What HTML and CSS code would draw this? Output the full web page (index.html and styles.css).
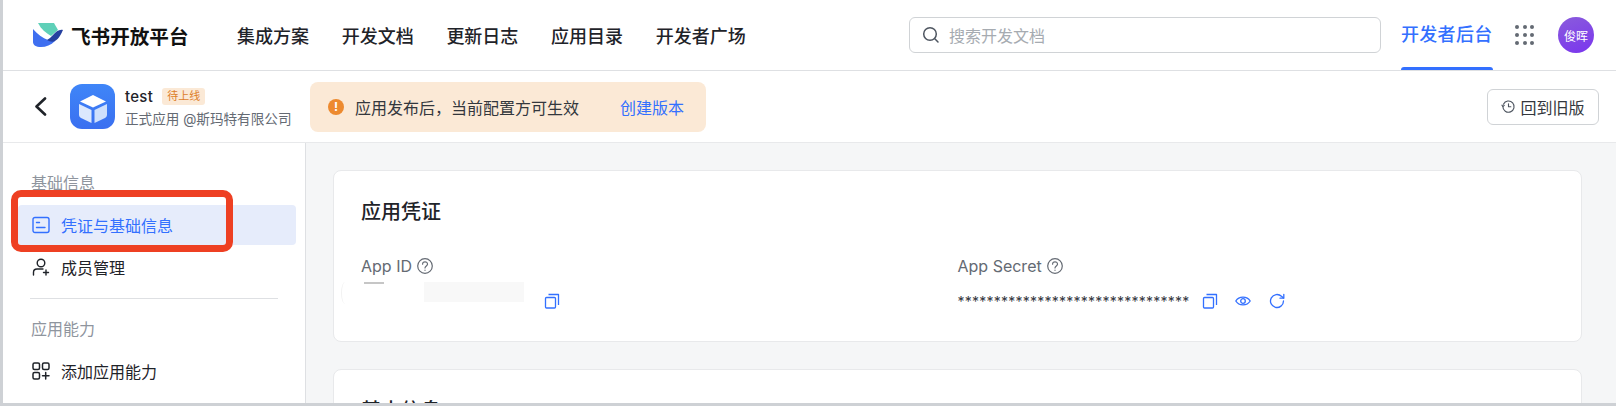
FILE: index.html
```html
<!DOCTYPE html>
<html lang="zh">
<head>
<meta charset="utf-8">
<title>飞书开放平台</title>
<link rel="stylesheet" href="styles.css">
</head>
<body>
<div class="page">
  <header class="topbar">
    <div class="brand">
      <svg class="brand-mark" viewBox="0 0 30 24" width="30" height="24">
        <path fill="#5fd0b8" d="M5 0H21L25 7L18 13C13 10 8 6 5 0Z"/>
        <path fill="#3f6ff0" d="M0 6C4 11 10 15 15 17L22 18C18 22 13 24 8 24C3 24 0 22 0 19Z"/>
        <path fill="#25409f" d="M30 7C26 6 23 9 20 12C18 14 16 16 14 17C17 19 20 19 22 18C26 16 28 11 30 7Z"/>
      </svg>
      <span class="brand-name">飞书开放平台</span>
    </div>
    <nav class="nav">
      <a>集成方案</a><a>开发文档</a><a>更新日志</a><a>应用目录</a><a>开发者广场</a>
    </nav>
    <div class="search">
      <svg viewBox="0 0 18 18" width="18" height="18" fill="none" stroke="#4e5560" stroke-width="1.5" stroke-linecap="round"><circle cx="8" cy="8" r="6.3"/><path d="M12.8 12.8L16 16"/></svg>
      <span>搜索开发文档</span>
    </div>
    <a class="console">开发者后台</a>
    <div class="apps">
      <i></i><i></i><i></i><i></i><i></i><i></i><i></i><i></i><i></i>
    </div>
    <div class="avatar">俊晖</div>
  </header>

  <section class="subbar">
    <svg class="back" viewBox="0 0 13 19" width="13" height="19" fill="none" stroke="#1f2329" stroke-width="2.6" stroke-linecap="round" stroke-linejoin="round"><path d="M11 1.5L2.500 9.500L11 17.500"/></svg>
    <div class="app-icon">
      <svg viewBox="0 0 44 44" width="44" height="44">
        <path fill="#fff" d="M22 10L35 16.500L22 22.500L9 16.500Z"/>
        <path fill="#dbe8fd" d="M8 19L20.500 25V38L10 33C8.500 32 8 31 8 29.500Z"/>
        <path fill="#cfe0fc" d="M36 19L23.500 25V38L34 33C35.500 32 36 31 36 29.500Z"/>
      </svg>
    </div>
    <div class="app-meta">
      <div class="app-title"><span class="app-name">test</span><span class="tag">待上线</span></div>
      <div class="app-sub">正式应用 @斯玛特有限公司</div>
    </div>
    <div class="notice">
      <span class="notice-icon">!</span>
      <span class="notice-text">应用发布后，当前配置方可生效</span>
      <a class="notice-link">创建版本</a>
    </div>
    <button class="old-btn">
      <svg viewBox="0 0 16 16" width="15" height="15" fill="none" stroke="#4e5560" stroke-width="1.2" stroke-linecap="round" stroke-linejoin="round"><path d="M2.600 5.500A6 6 0 1 1 2 8"/><path d="M1 6.500L2 8L3.500 6.800"/><path d="M8 5V8.300H10.500"/></svg>
      回到旧版
    </button>
  </section>

  <div class="body">
    <aside class="sidebar">
      <div class="group-title first">基础信息</div>
      <div class="item active">
        <svg viewBox="0 0 18 18" width="18" height="18" fill="none" stroke="#3370ff" stroke-width="1.4" stroke-linecap="round"><rect x="1" y="1.500" width="16" height="15" rx="2"/><path d="M4.500 6.500H7.500M4.500 11.500H13"/></svg>
        凭证与基础信息
      </div>
      <div class="item">
        <svg viewBox="0 0 18 18" width="18" height="18" fill="none" stroke="#1f2329" stroke-width="1.4" stroke-linecap="round"><circle cx="9" cy="5" r="3.800"/><path d="M1.500 17V14.500C1.500 12.500 3 11 5 11H11M14 12V17M11.500 14.500H16.500"/></svg>
        成员管理
      </div>
      <div class="divider"></div>
      <div class="group-title">应用能力</div>
      <div class="item">
        <svg viewBox="0 0 18 18" width="18" height="18" fill="none" stroke="#1f2329" stroke-width="1.5" stroke-linecap="round"><rect x="1" y="1" width="6.500" height="6.500" rx="1.500"/><rect x="10.500" y="1" width="6.500" height="6.500" rx="1.500"/><rect x="1" y="10.500" width="6.500" height="6.500" rx="1.500"/><path d="M13.700 10.500V17M10.500 13.700H17"/></svg>
        添加应用能力
      </div>
      <div class="divider low"></div>
    </aside>

    <main class="main">
      <section class="card">
        <h2>应用凭证</h2>
        <div class="fields">
          <div class="field">
            <div class="label">App ID
              <svg viewBox="0 0 16 16" width="16" height="16" fill="none" stroke="#646a73" stroke-width="1.2" stroke-linecap="round"><circle cx="8" cy="8" r="7.300"/><path d="M5.600 6.200C5.600 3 10.500 3 10.500 6.200C10.500 7.900 8 8 8 10"/><path d="M8 12.200V12.300"/></svg>
            </div>
            <div class="value value-id">
              <i class="mask-line"></i><i class="mask-patch"></i><i class="mask-arc"></i>
              <svg class="act" viewBox="0 0 16 16" width="16" height="16" fill="none" stroke="#3370ff" stroke-width="1.300" stroke-linejoin="round"><rect x="1.500" y="4.500" width="10" height="10.500" rx="1"/><path d="M4.500 1.500H14.500V12"/></svg>
            </div>
          </div>
          <div class="field">
            <div class="label">App Secret
              <svg viewBox="0 0 16 16" width="16" height="16" fill="none" stroke="#646a73" stroke-width="1.2" stroke-linecap="round"><circle cx="8" cy="8" r="7.300"/><path d="M5.600 6.200C5.600 3 10.500 3 10.500 6.200C10.500 7.900 8 8 8 10"/><path d="M8 12.200V12.300"/></svg>
            </div>
            <div class="value">
              <span class="secret">********************************</span>
              <div class="actions">
                <svg viewBox="0 0 16 16" width="16" height="16" fill="none" stroke="#3370ff" stroke-width="1.300" stroke-linejoin="round"><rect x="1.500" y="4.500" width="10" height="10.500" rx="1"/><path d="M4.500 1.500H14.500V12"/></svg>
                <svg viewBox="0 0 16 16" width="16" height="16" fill="none" stroke="#3370ff" stroke-width="1.300"><path d="M.8 8C4 2.800 12 2.800 15.200 8C12 13.200 4 13.200 .8 8Z"/><circle cx="8" cy="8" r="2.300"/></svg>
                <svg viewBox="0 0 16 16" width="16" height="16" fill="none" stroke="#3370ff" stroke-width="1.300" stroke-linecap="round" stroke-linejoin="round"><path d="M14.500 8A6.500 6.500 0 1 1 12.500 3.300L14.500 5"/><path d="M14.800 1.300V5.200H11"/></svg>
              </div>
            </div>
          </div>
        </div>
      </section>
      <section class="card second">
        <h2>基本信息</h2>
      </section>
    </main>
  </div>
  <div class="callout-box"></div>
</div>
</body>
</html>
```

FILE: styles.css
```css
* { box-sizing: border-box; }
html, body { margin: 0; padding: 0; }
body {
  font-family: Inter, "Noto Sans CJK SC", sans-serif;
  color: #1f2329;
  background: #fff;
}
.page {
  position: relative;
  width: 1616px;
  height: 406px;
  overflow: hidden;
  border-left: 3px solid #ced1d5;
  border-bottom: 3px solid #ced1d5;
  display: flex;
  flex-direction: column;
}
.topbar {
  flex: none;
  height: 71px;
  border-bottom: 1px solid #dee0e3;
  display: flex;
  align-items: center;
  padding-left: 30px;
}
.brand { display: flex; align-items: center; gap: 8px; width: 204px; }
.brand-mark { flex: none; }
.brand-name { font-size: 19.600px; font-weight: 700; color: #111; white-space: nowrap; }
.nav { display: flex; gap: 32.700px; width: 672px; font-size: 18px; font-weight: 500; color: #1f2329; }
.search {
  width: 472px;
  height: 36px;
  border: 1px solid #d0d3d6;
  border-radius: 6px;
  display: flex;
  align-items: center;
  gap: 9px;
  padding-left: 12px;
  font-size: 16px;
  color: #a6abb1;
}
.console {
  margin-left: 20px;
  width: 92px;
  height: 70px;
  line-height: 70px;
  font-size: 18px;
  font-weight: 500;
  letter-spacing: .3px;
  color: #3370ff;
  white-space: nowrap;
  position: relative;
}
.console::after {
  content: "";
  position: absolute;
  left: 0;
  right: 0;
  bottom: 0;
  height: 3px;
  background: #3370ff;
  border-radius: 3px 3px 0 0;
}
.apps {
  margin-left: 22px;
  width: 18px;
  display: grid;
  grid-template-columns: repeat(3, 4px);
  grid-auto-rows: 4px;
  gap: 4px 3.500px;
}
.apps i { background: #646a73; border-radius: 50%; }
.avatar {
  margin-left: 25px;
  width: 36px;
  height: 36px;
  border-radius: 50%;
  background: linear-gradient(160deg, #8a5cdc, #7a35ee);
  color: #fff;
  font-size: 12px;
  display: flex;
  align-items: center;
  justify-content: center;
}
.subbar {
  flex: none;
  height: 72px;
  border-bottom: 1px solid #e8e9eb;
  display: flex;
  align-items: center;
  padding-left: 31px;
}
.back { flex: none; }
.app-icon {
  margin-left: 23px;
  width: 45px;
  height: 45px;
  border-radius: 12px;
  background: linear-gradient(180deg, #3f86f8, #3a6ff0);
  display: flex;
  align-items: center;
  justify-content: center;
}
.app-meta { margin-left: 10px; width: 185px; padding-top: 2px; }
.app-title { display: flex; align-items: center; gap: 9px; height: 20px; }
.app-name { font-size: 15px; font-weight: 500; letter-spacing: .3px; }
.tag {
  height: 17px;
  padding: 0 5px;
  line-height: 17px;
  font-size: 11px;
  border-radius: 3px;
  color: #dd7e29;
  background: #fbe9d6;
}
.app-sub { margin-top: 2px; font-size: 13.600px; line-height: 20px; color: #646a73; white-space: nowrap; }
.notice {
  width: 396px;
  height: 50px;
  border-radius: 8px;
  background: #fbe9d6;
  display: flex;
  align-items: center;
  padding-left: 18px;
  font-size: 16px;
  color: #33373d;
}
.notice-icon {
  width: 16px;
  height: 16px;
  border-radius: 50%;
  background: #ed8a2f;
  color: #fff;
  font-size: 12px;
  font-weight: 700;
  line-height: 16px;
  text-align: center;
}
.notice-text { margin-left: 11px; }
.notice-link { margin-left: 41px; color: #3370ff; }
.old-btn {
  margin-left: auto;
  margin-right: 17px;
  width: 112px;
  height: 36px;
  border: 1px solid #d0d3d6;
  border-radius: 6px;
  background: #fff;
  display: flex;
  align-items: center;
  justify-content: center;
  gap: 4px;
  padding: 0;
  font-family: inherit;
  font-size: 16px;
  color: #33373d;
}
.body { flex: 1; min-height: 0; display: flex; }
.sidebar {
  flex: none;
  width: 303px;
  border-right: 1px solid #dee0e3;
  padding: 0 9px 0 15px;
}
.group-title {
  height: 24px;
  line-height: 24px;
  padding-left: 13px;
  font-size: 16px;
  color: #8f959e;
}
.group-title.first { margin-top: 28px; margin-bottom: 10px; }
.item {
  height: 40px;
  display: flex;
  align-items: center;
  gap: 11px;
  padding-left: 14px;
  font-size: 16px;
  border-radius: 4px;
}
.item.active { background: #e6ecfb; color: #3370ff; margin-bottom: 2px; }
.divider { height: 1px; margin: 11px 11px 0 12px; background: #dee0e3; width: 248px; }
.sidebar > .divider + .group-title { margin-top: 18px; margin-bottom: 10px; }
.divider.low { margin-top: 12px; }
.callout-box {
  position: absolute;
  left: 8px;
  top: 190px;
  width: 222px;
  height: 62px;
  border: 7px solid #ee4023;
  border-radius: 10px;
}
.main {
  flex: 1;
  min-width: 0;
  background: #f5f6f7;
  padding: 27px 34px 0 27px;
  overflow: hidden;
}
.card {
  height: 172px;
  background: #fff;
  border: 1px solid #e8e9eb;
  border-radius: 8px;
  padding: 27px 27px 0;
}
.card.second { margin-top: 27px; height: 120px; }
h2 {
  margin: 0;
  font-size: 20px;
  line-height: 28px;
  font-weight: 500;
  color: #1f2329;
}
.fields { display: flex; margin-top: 28px; }
.field { width: 597px; }
.label {
  display: flex;
  align-items: center;
  gap: 5px;
  height: 24px;
  font-size: 16px;
  color: #646a73;
}
.value {
  position: relative;
  display: flex;
  align-items: center;
  height: 24px;
  margin-top: 11px;
}
.value-id { padding-left: 183px; }
.mask-line {
  position: absolute;
  left: 3px;
  top: -7px;
  width: 20px;
  height: 2px;
  background: #c6c6c6;
}
.mask-patch {
  position: absolute;
  left: 63px;
  top: -7px;
  width: 100px;
  height: 20px;
  background: #f8f8f8;
}
.mask-arc {
  position: absolute;
  left: -20px;
  top: -7px;
  width: 8px;
  height: 22px;
  border-left: 1px solid #f2f2f2;
  border-radius: 50%;
}
.secret { font-size: 14px; letter-spacing: .24px; color: #33373d; width: 244px; white-space: nowrap; }
.actions { display: flex; gap: 17.500px; }
```
